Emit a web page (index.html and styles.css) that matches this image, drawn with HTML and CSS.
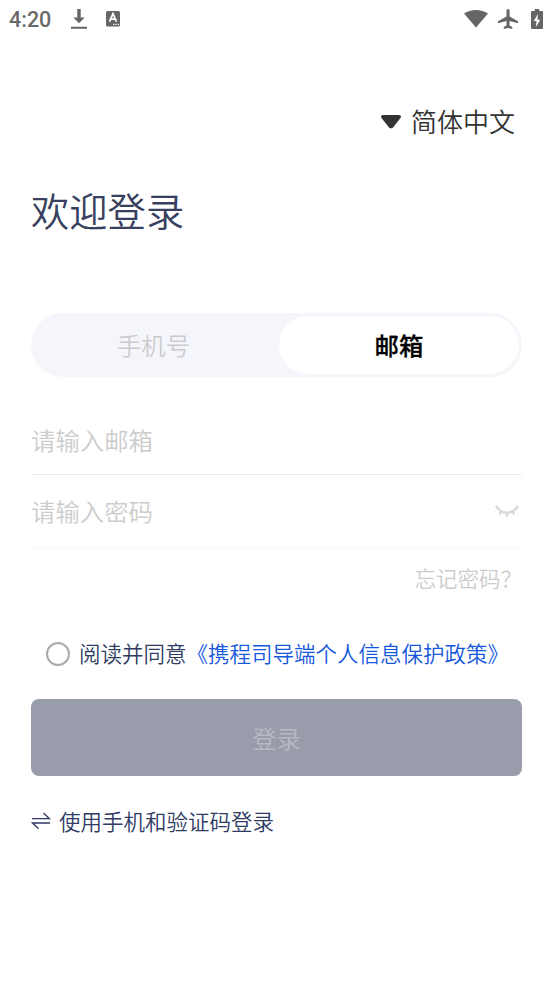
FILE: index.html
```html
<!DOCTYPE html>
<html lang="zh-CN">
<head>
<meta charset="utf-8">
<title>欢迎登录</title>
<link rel="stylesheet" href="styles.css">
</head>
<body>
<header class="status">
  <span class="time">4:20</span>
  <svg class="download" width="18" height="22" viewBox="0 0 18 22"><path d="M7.3 1h3.4v8.4h4L9 15.2 3.3 9.4h4zM1 18.7h16v2H1z"/></svg>
  <svg class="keyboard" width="16" height="17" viewBox="0 0 16 17"><rect x="1" y="1" width="14" height="15.5" rx="1.5"/><path d="M4.5 11.7 8 3.7l3.5 8M5.7 9.2h4.6" fill="none" stroke="#fff" stroke-width="1.7"/><path d="M8.2 13.7h1.3v1.3H8.2zM10.5 13.7h1.3v1.3h-1.3zM12.8 13.7h1.2v1.3h-1.2z" fill="#fff"/></svg>
  <svg class="wifi" width="24" height="20" viewBox="0 0 24 20"><path d="M0 4.500C7-.3 17-.3 24 4.500L12 18.500z"/></svg>
  <svg class="plane" width="20" height="20" viewBox="0 0 20 20"><path d="M20 14.200v-2L11.600 7.400V1.600a1.550 1.550 0 0 0-3.100 0v5.800L0 12.200v2l8.500-2.200v4.500l-2.700 1.600V20l4.200-1 4.300 1v-1.900l-2.700-1.600V12z"/></svg>
  <svg class="battery" width="12" height="20" viewBox="0 0 12 20"><path d="M3.700 0h4.600v2H11q1 0 1 1v16q0 1-1 1H1q-1 0-1-1V3q0-1 1-1h2.700z"/><path d="M7 5 2.700 12H5.500l-.5 6 4.300-7.300H6.500z" fill="#fff"/></svg>
</header>
<main class="page">
  <div class="language">
    <svg width="20" height="14" viewBox="0 0 20 14"><path d="M2 0h16q3 .5 1.500 3L12 12.500q-2 1.700-4 0L.5 3Q-1 .5 2 0z"/></svg>
    <span>简体中文</span>
  </div>
  <h1 class="title">欢迎登录</h1>
  <div class="tabs">
    <div class="tab">手机号</div>
    <div class="tab active">邮箱</div>
  </div>
  <div class="field">请输入邮箱</div>
  <div class="field password">
    <span>请输入密码</span>
    <svg width="24" height="14" viewBox="0 0 24 14" fill="none" stroke="#d9d9d9" stroke-width="2.400"><path d="M1 2c5.500 9 16.500 9 22 0M6.500 7 4.700 10.500M12 8.500V13M17.500 7l1.800 3.500"/></svg>
  </div>
  <div class="forgot">忘记密码？</div>
  <div class="agree"><span class="radio"></span><span>阅读并同意<a class="policy">《携程司导端个人信息保护政策》</a></span></div>
  <div class="submit">登录</div>
  <div class="switch">
    <svg width="20" height="18" viewBox="0 0 20 18" fill="none" stroke="#2e3b63" stroke-width="1.300"><path d="M1 6.700h17.500L12.500 1M19 11H1.500l6 5.700"/></svg>
    <span>使用手机和验证码登录</span>
  </div>
</main>
</body>
</html>
```
FILE: styles.css
```css
* { box-sizing: border-box; }
body {
  margin: 0;
  background: #fff;
  font-family: "Noto Sans CJK SC", sans-serif;
  font-weight: 350;
  color: #2e3b63;
}
svg { display: block; flex: none; }
.status {
  display: flex;
  align-items: center;
  height: 37px;
  padding: 0 10px 0 9px;
  fill: #666;
}
.time {
  width: 61px;
  font: 500 21.5px/37px Roboto, sans-serif;
  color: #6a6a6a;
  padding-top: 1px;
}
.keyboard { margin-left: 17px; }
.wifi { margin-left: auto; }
.plane { margin-left: 10px; }
.battery { margin-left: 13px; }
.page { padding: 62px 31px 0; }
.language {
  display: flex;
  justify-content: flex-end;
  align-items: center;
  gap: 10px;
  height: 42px;
  padding-right: 7px;
  font-size: 26px;
  color: #333;
  fill: #333;
}
.language svg { margin-top: 3px; }
.title {
  margin: 41px 0 0;
  font-size: 38.3px;
  line-height: 56px;
  font-weight: 350;
  color: #383f5f;
}
.tabs {
  display: flex;
  height: 64px;
  margin-top: 75px;
  padding: 3px;
  border-radius: 32px;
  background: #f5f6fb;
  font-size: 24.4px;
  line-height: 57px;
  text-align: center;
}
.tab {
  flex: 1;
  padding-right: 6px;
  color: #ccc;
}
.active {
  flex: 0 0 240px;
  padding: 0;
  border-radius: 29px;
  background: #fff;
  color: #000;
  font-weight: 500;
  -webkit-text-stroke: 0.3px #000;
}
.field {
  height: 71px;
  margin-top: 27px;
  border-bottom: 1px solid #ebebeb;
  font-size: 24.4px;
  line-height: 72px;
  color: #ccc;
}
.password {
  display: flex;
  justify-content: space-between;
  align-items: center;
  height: 74px;
  margin-top: 0;
  padding: 0 3px 1px 0;
  border-color: #f6f6f6;
}
.forgot {
  height: 58px;
  line-height: 58px;
  font-size: 21.5px;
  color: #ccc;
  text-align: right;
}
.agree {
  display: flex;
  align-items: center;
  gap: 9px;
  height: 44px;
  margin-top: 23px;
  padding-left: 15px;
  font-size: 21.5px;
  white-space: nowrap;
}
.radio {
  width: 24px;
  height: 24px;
  margin-top: 3px;
  border: 2px solid #aaa;
  border-radius: 50%;
}
.policy { color: #1558dc; }
.submit {
  height: 77px;
  margin-top: 25px;
  border-radius: 8px;
  background: #999cab;
  color: #b7b9c4;
  font-size: 24.4px;
  line-height: 77px;
  text-align: center;
}
.switch {
  display: flex;
  align-items: center;
  gap: 8px;
  height: 40px;
  margin-top: 24px;
  font-size: 21.5px;
}
.switch svg { margin-top: 2px; }
```
